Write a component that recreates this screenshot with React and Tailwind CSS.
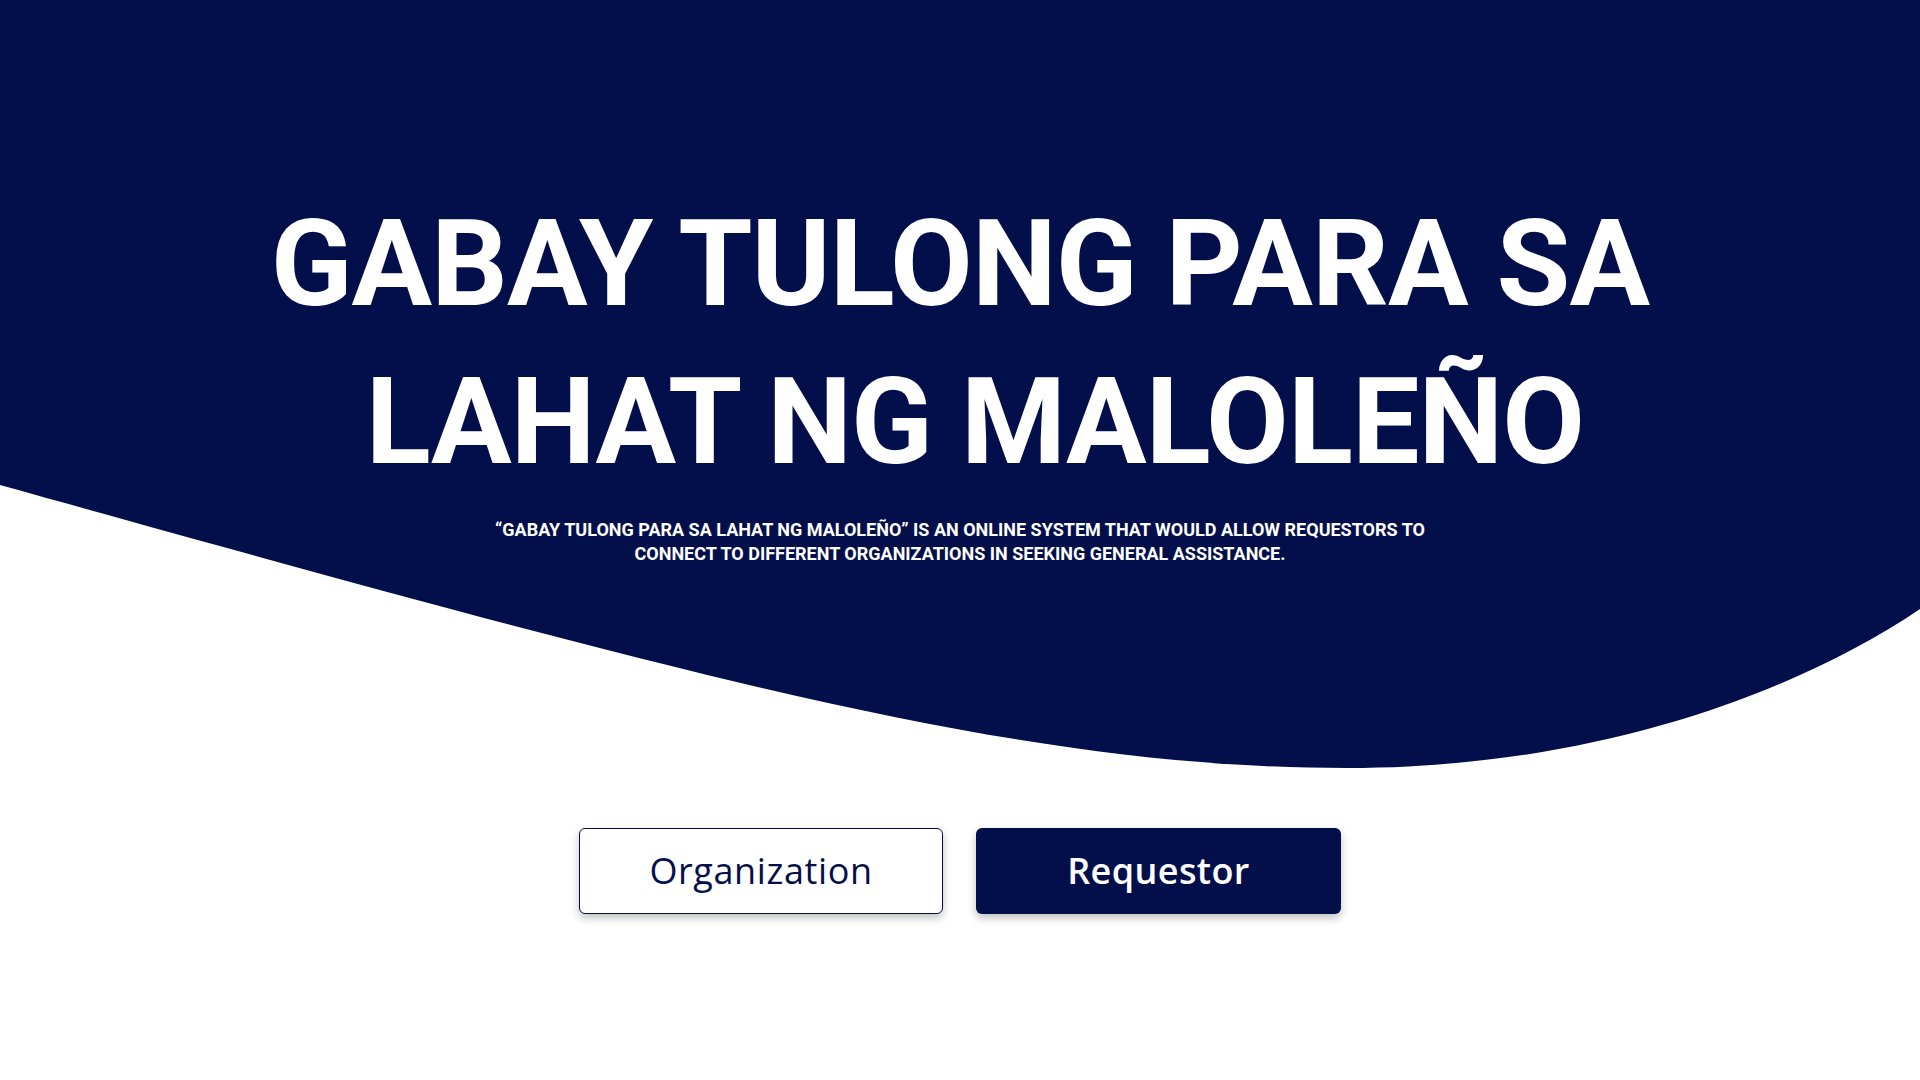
import React from 'react';

const Landing = () => {
  return (
    <div className="relative w-full h-[1080px] overflow-hidden bg-white" style={{ fontFamily: 'Roboto, "Liberation Sans", sans-serif' }}>
      {/* wave background */}
      <svg className="absolute inset-0 w-full h-full" viewBox="0 0 1920 1080" preserveAspectRatio="none">
        <path
          d="M0,0 H1920 V609 C1800,690 1600,768 1347,768 C1020,768 700,680 0,485 Z"
          fill="#030f4a"
        />
      </svg>

      <div className="relative flex flex-col items-center pt-[185px]">
        <h1 className="text-white font-bold text-[120px] leading-[158px] text-center tracking-[-0.9px]">
          <span className="block">GABAY TULONG PARA SA</span>
          <span className="block pl-[30px]">LAHAT NG MALOLEÑO</span>
        </h1>
        <p className="mt-[17px] max-w-[980px] text-white font-bold text-[18px] leading-[24px] text-center">
          “GABAY TULONG PARA SA LAHAT NG MALOLEÑO” IS AN ONLINE SYSTEM THAT WOULD ALLOW REQUESTORS TO
          <br />
          CONNECT TO DIFFERENT ORGANIZATIONS IN SEEKING GENERAL ASSISTANCE.
        </p>

        <div className="mt-[262px] flex gap-[33px]" style={{ fontFamily: '"Open Sans", sans-serif' }}>
          <button className="w-[364px] h-[86px] rounded-md border border-[#030f4a] bg-white text-[#030f4a] text-[36px] tracking-[0.6px] font-medium shadow-[0_4px_8px_rgba(0,0,0,0.25)]">
            Organization
          </button>
          <button className="w-[365px] h-[86px] rounded-md bg-[#030f4a] text-white text-[36px] tracking-[0.4px] font-semibold shadow-[0_4px_8px_rgba(0,0,0,0.25)]">
            Requestor
          </button>
        </div>
      </div>
    </div>
  );
};

export default function App() {
  return <Landing />;
}
